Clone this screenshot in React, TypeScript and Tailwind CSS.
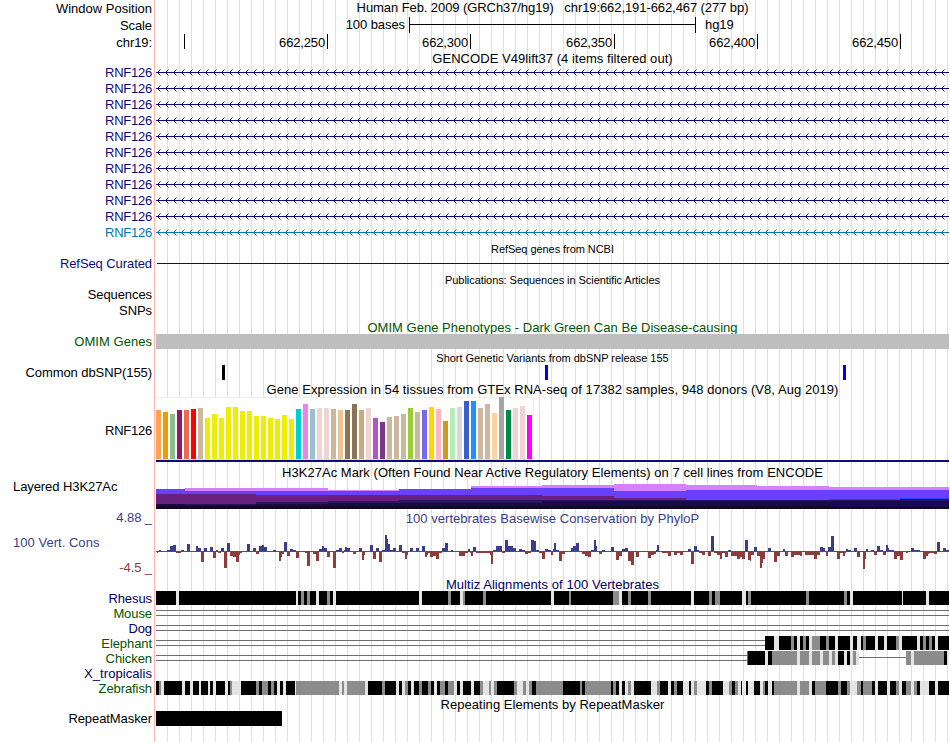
import React from 'react';
import { clsx } from 'clsx';

const TRACK_WIDTH = 793;

const NAVY = 'text-[#0c0c78]';
const GREEN = 'text-[#005500]';
const CONS_BLUE = 'text-[#3c3c8c]';
const CONS_RED = 'text-[#8c3c3c]';

interface RowProps {
  height: string;
  label?: string;
  labelClass?: string;
  alignLeft?: boolean;
  children?: React.ReactNode;
}

const Row: React.FC<RowProps> = ({ height, label, labelClass = 'pt-px', alignLeft, children }) => (
  <div className={clsx('flex', height)}>
    <div className="w-[156px] shrink-0 bg-white">
      <div
        className={clsx(
          'h-full w-[155px] border-r border-[#ffb4b4] whitespace-pre',
          alignLeft ? 'pl-[13px] text-left' : 'pr-0.5 text-right',
          labelClass
        )}
      >
        {label}
      </div>
    </div>
    <div className="w-[793px] shrink-0">{children}</div>
  </div>
);

const Title: React.FC<{ className?: string; children: React.ReactNode }> = ({ className, children }) => (
  <div className={clsx('text-center whitespace-pre', className)}>{children}</div>
);

// Intron line with strand arrows every 8px
const Transcript: React.FC<{ color: string }> = ({ color }) => {
  const tips = Array.from({ length: 99 }, (_, i) => 1.5 + i * 8);
  return (
    <svg width={TRACK_WIDTH} height={16} className="block" fill="none" stroke={color}>
      <path d={`M0 8.5H${TRACK_WIDTH}`} />
      <path d={tips.map((x) => `M${x + 3} 5.5L${x} 8.5L${x + 3} 11.5`).join('')} />
    </svg>
  );
};

const RULER = [
  { width: 'w-[29px]', text: '' },
  { width: 'w-[143px]', text: '662,250' },
  { width: 'w-[143px]', text: '662,300' },
  { width: 'w-[144px]', text: '662,350' },
  { width: 'w-[143px]', text: '662,400' },
  { width: 'w-[143px]', text: '662,450' },
];

// [color, height]
const TISSUES: [string, number][] = [
  ['#FFA54F', 49], ['#EE9A00', 47], ['#8FBC8F', 45], ['#8B1C62', 49], ['#EE6A50', 49], ['#FF0000', 50],
  ['#CDB79E', 51], ['#EEEE00', 41], ['#EEEE00', 45], ['#EEEE00', 41], ['#EEEE00', 52], ['#EEEE00', 52],
  ['#EEEE00', 48], ['#EEEE00', 48], ['#EEEE00', 43], ['#EEEE00', 43], ['#EEEE00', 41], ['#EEEE00', 40],
  ['#EEEE00', 44], ['#EEEE00', 40], ['#00CDCD', 50], ['#EE82EE', 55], ['#9AC0CD', 50], ['#EED5D2', 51],
  ['#EED5D2', 51], ['#CDB79E', 50], ['#EEC591', 49], ['#8B7355', 49], ['#8B7355', 55], ['#CDAA7D', 49],
  ['#EED5D2', 51], ['#B452CD', 41], ['#7A378B', 37], ['#CDB79E', 42], ['#CDB79E', 43], ['#CDB79E', 45],
  ['#9ACD32', 51], ['#CDB79E', 47], ['#7A67EE', 49], ['#FFD700', 52], ['#FFB6C1', 50], ['#CD9B1D', 38],
  ['#B4EEB4', 51], ['#D9D9D9', 52], ['#3A5FCD', 58], ['#1E90FF', 58], ['#CDB79E', 51], ['#CDB79E', 55],
  ['#FFD39B', 46], ['#A6A6A6', 62], ['#008B45', 49], ['#EED5D2', 51], ['#EED5D2', 53], ['#FF00FF', 44],
];

// Each step: x start, then the top of every layer (pink, violet, plum, blue, indigo, navy, black)
const H3K_COLORS = ['#d480ff', '#6a40ff', '#6a207f', '#2a40ff', '#2a1660', '#160a50', '#140820'];
const H3K_STEPS: [number, number[]][] = [
  [0, [6, 6, 11, 21, 21, 21, 23]],
  [29, [5, 8, 11, 21, 21, 22, 23]],
  [100, [5, 8, 12, 19, 19, 21, 23]],
  [172, [7, 8, 12, 18, 18, 20, 23]],
  [243, [6, 6, 12, 17, 17, 20, 23]],
  [315, [3, 5, 12, 17, 17, 20, 23]],
  [386, [2, 5, 13, 17, 17, 18, 23]],
  [458, [1, 8, 15, 17, 17, 18, 23]],
  [530, [2, 7, 17, 17, 17, 18, 23]],
  [601, [3, 7, 17, 17, 17, 18, 23]],
  [673, [4, 7, 16, 16, 17, 18, 24]],
  [744, [4, 7, 15, 15, 16, 18, 24]],
];

// Basewise scores as width:score runs
const PHYLOP =
  '1:-1 1:-2 1:-1 2:1 6:-1 3:1 3:5 3:6 5:-2 3:1 3:-1 3:7 6:-1 2:5 3:3 3:-11 3:3 3:-1 3:4 3:-7 2:1 3:-2 3:3 3:-17 3:8 3:-5 3:-6 3:-11 1:-4 2:-2 5:-1 3:7 3:-1 3:3 3:-3 3:5 2:6 3:4 6:-1 3:1 3:-1 2:-10 1:-6 2:-3 3:9 3:-5 3:2 3:1 3:-7 6:-1 2:-2 3:-15 3:-1 3:-3 3:-10 3:2 2:5 3:3 3:-6 3:-1 3:-17 3:1 3:3 2:-2 1:1 2:4 3:3 ' +
  '3:-1 3:-3 3:-1 3:3 2:-9 1:-4 5:-1 3:6 3:-8 3:3 3:-11 3:1 2:16 1:12 2:7 3:1 3:3 3:-1 3:6 3:-2 2:-8 1:-4 2:-1 3:3 3:-1 3:3 3:-1 3:5 2:-6 1:-4 2:-2 3:-6 3:-5 3:-8 3:-2 3:3 3:8 3:-1 2:1 6:-1 6:-5 3:-2 2:2 1:-2 2:-5 3:4 14:-2 1:-4 2:-13 3:1 6:5 3:-2 3:11 5:5 3:3 3:-1 3:2 3:1 3:-3 3:-2 3:11 2:10 3:1 3:-2 3:-8 3:2 2:1 ' +
  '1:1 2:-4 1:2 2:8 3:1 3:-10 3:-3 6:-1 2:3 3:5 3:8 3:-1 3:-3 3:-5 3:-6 3:1 2:11 1:5 2:-1 3:-3 3:1 6:-1 3:4 2:-1 3:-9 3:-5 3:2 3:3 3:-10 3:-14 2:-1 3:-6 9:-1 3:-7 3:-4 2:-3 1:1 2:6 3:-1 6:-2 3:-5 3:-1 3:-4 3:-2 3:-4 5:-1 3:2 3:-13 3:5 2:1 3:-2 3:-4 3:-1 3:-5 3:15 3:-2 3:-4 2:-8 3:-2 3:-6 3:1 6:-5 3:-8 2:-6 3:-8 3:11 2:-9 ' +
  '1:-10 3:-4 3:4 3:-5 2:-17 1:-12 2:-8 3:-1 3:3 3:-1 3:-11 3:-5 3:-1 2:2 3:-5 3:-1 3:-6 6:-4 2:-5 3:-1 9:-4 3:-8 3:-4 3:4 2:3 1:-1 2:-5 3:4 3:15 3:-1 3:-8 3:-2 2:-5 1:-2 2:2 3:1 3:-1 3:3 3:-6 3:-1 2:-18 1:-8 2:2 3:-1 3:1 3:-4 3:5 3:1 3:-4 2:6 1:3 5:1 3:-8 3:-5 3:-9 3:-1 2:-2 3:-1 3:3 6:1 3:-1 3:-8 2:-5 1:-3 5:-2 3:-3 3:9 3:-1 3:3 3:1';

const Phylop: React.FC = () => {
  let x = 0;
  let up = '';
  let down = '';
  PHYLOP.split(' ').forEach((run) => {
    const [w, v] = run.split(':').map(Number);
    if (v > 0) up += `M${x} 22h${w}v${-v}h${-w}z`;
    else down += `M${x} 22h${w}v${-v}h${-w}z`;
    x += w;
  });
  return (
    <svg width={TRACK_WIDTH} height={48} className="block" shapeRendering="crispEdges">
      <path d={`M0 22h${TRACK_WIDTH}v1h${-TRACK_WIDTH}z`} fill="#5a4680" />
      <path d={up} fill="#3c3c8c" />
      <path d={down} fill="#8c3c3c" />
    </svg>
  );
};

// Alignment blocks as shade + width: k black, g gray, l light, n nothing
const RHESUS =
  'k20 l3 k117 l2 k3 g3 k3 g3 k6 l3 k8 g3 k3 l3 k14 k69 l3 k26 g3 k9 l3 g2 k18 g3 k64 ' +
  'k1 l3 k15 g2 k42 g6 l3 k6 g3 k17 g3 k40 l3 k15 g3 k3 g5 k22 l4 k2 g2 ' +
  'g1 k55 g3 k35 g3 k3 l3 k49 l1 k23 l3 k20';
const ELEPHANT =
  'n609 k9 l5 k12 g3 k3 l3 k3 g3 k3 l3 g8 k6 g3 k6 l3 k12 l3 k4 l4 k2 g3 k9 l3 k6 l3 k9 g3 l3 k15 l3 k3 g3 k3 g3 k3 l3 k11';
const CHICKEN =
  'n591 e1 k17 l3 k4 g25 l3 g9 l3 g8 l3 g6 l3 g3 l3 k6 l3 k3 l3 g3 l3 n47 g5 l3 g30 k3 l2';
const ZEBRAFISH =
  'k3 g2 l3 k18 l3 k5 l3 k6 l2 k7 l2 k3 l3 k9 l3 k2 g2 l9 k15 g3 k3 g6 k3 g3 k3 l3 k3 l3 k9 l1 g43 l3 g2 l3 g3 ' +
  'g15 l3 k14 g3 k11 l3 k3 l3 g3 k3 l3 k5 g3 k6 g3 k3 l3 k3 g5 k3 g6 l3 k3 l3 k8 l3 k6 g3 l6 g2 l3 g3 k17 g3 l6 g3 l3 g3 k4 g14 ' +
  'g13 k17 g2 k3 g26 k2 g3 k3 l3 k3 l3 g3 l3 k17 l6 g3 k8 l3 k3 g3 k6 l6 k2 l3 g3 l9 k3 g3 k11 l6 g3 k3 g3 l3 k1 l4 k2 l2 ' +
  'l4 k6 l3 g2 k3 l4 k2 g23 l3 g9 l3 k3 g11 k12 g3 k6 g3 l7 g4 k2 g9 k3 l3 k9 l3 k6 g3 l3 k4 g5 l3 g3 k3 l9 k6 l3 k11';

const SHADES: Record<string, string> = { k: '#000000', g: '#8c8c8c', l: '#e4e4e4', e: '#00b400' };

interface AlignmentProps {
  blocks?: string;
  doubleTo?: number;
  single?: [number, number];
}

const Alignment: React.FC<AlignmentProps> = ({ blocks = '', doubleTo = 0, single }) => {
  let x = 0;
  const rects = blocks.split(' ').filter(Boolean).map((block) => {
    const w = Number(block.slice(1));
    const rect = { x, w, fill: SHADES[block[0]] };
    x += w;
    return rect;
  });
  return (
    <svg width={TRACK_WIDTH} height={15} className="block" shapeRendering="crispEdges">
      {doubleTo > 0 && (
        <>
          <rect x={0} y={4} width={doubleTo} height={1} fill="#6e6e6e" />
          <rect x={0} y={9} width={doubleTo} height={1} fill="#6e6e6e" />
        </>
      )}
      {single && <rect x={single[0]} y={6} width={single[1]} height={1} fill="#6e6e6e" />}
      {rects.map((r, i) => r.fill && <rect key={i} x={r.x} y={0} width={r.w} height={14} fill={r.fill} />)}
    </svg>
  );
};

export default function App() {
  return (
    <div className="h-[742px] w-[950px] overflow-hidden bg-white bg-[linear-gradient(to_right,#dcdcf8_1px,transparent_1px)] bg-[length:12px_100%] bg-[position:11px_0] font-['Liberation_Sans',Arial,sans-serif] text-[13px] leading-[15px] tracking-[-0.08px] text-black">
      {/* Position header */}
      <Row height="h-[17px]" label="Window Position" labelClass="pt-px tracking-[0px]">
        <Title>{'Human Feb. 2009 (GRCh37/hg19)   chr19:662,191-662,467 (277 bp)'}</Title>
      </Row>
      <Row height="h-[17px]" label="Scale">
        <div className="flex">
          <span className="w-[253px] pr-1 text-right">100 bases</span>
          <svg width={287} height={17} shapeRendering="crispEdges">
            <path d="M0 0h1v7h285v-7h1v16h-1v-8h-285v8h-1z" />
          </svg>
          <span className="pl-[9px]">hg19</span>
        </div>
      </Row>
      <Row height="h-[17px]" label="chr19:">
        <div className="flex h-[15px]">
          {RULER.map((tick) => (
            <span
              key={tick.width + tick.text}
              className={clsx('border-r border-black pt-px pr-0.5 text-right tracking-[-0.15px]', tick.width)}
            >
              {tick.text}
            </span>
          ))}
        </div>
      </Row>

      {/* Genes */}
      <Row height="h-[13px]">
        <Title className="tracking-[0.05px]">GENCODE V49lift37 (4 items filtered out)</Title>
      </Row>
      {Array.from({ length: 10 }, (_, i) => (
        <Row key={i} height="h-4" label="RNF126" labelClass={clsx('pt-px tracking-[-0.25px]', NAVY)}>
          <Transcript color="#0c0c78" />
        </Row>
      ))}
      <Row height="h-4" label="RNF126" labelClass="pt-px tracking-[-0.25px] text-[#0078b4]">
        <Transcript color="#0078b4" />
      </Row>
      <Row height="h-4">
        <Title className="pt-0.5 text-[11px] tracking-[-0.06px]">RefSeq genes from NCBI</Title>
      </Row>
      <Row height="h-4" label="RefSeq Curated" labelClass={NAVY}>
        <div className="pt-[7px] pl-px">
          <div className="h-px bg-[#0c0c78]" />
        </div>
      </Row>

      {/* Literature and variants */}
      <Row height="h-[15px]">
        <Title className="pt-px text-[11px] tracking-[-0.06px]">Publications: Sequences in Scientific Articles</Title>
      </Row>
      <Row height="h-4" label="Sequences" labelClass="" />
      <Row height="h-4" label="SNPs" labelClass="" />
      <Row height="h-[15px]">
        <Title className={clsx('pt-px tracking-[0.03px]', GREEN)}>
          OMIM Gene Phenotypes - Dark Green Can Be Disease-causing
        </Title>
      </Row>
      <Row height="h-4" label="OMIM Genes" labelClass={clsx('tracking-[0.04px]', GREEN)}>
        <div className="h-[15px] bg-[#bebebe]" />
      </Row>
      <Row height="h-[15px]">
        <Title className="pt-px text-[11px] tracking-[-0.02px]">Short Genetic Variants from dbSNP release 155</Title>
      </Row>
      <Row height="h-4" label="Common dbSNP(155)" labelClass="">
        <div className="flex h-[15px]">
          <div className="ml-[66px] w-[3px] bg-black" />
          <div className="ml-[320px] w-[3px] bg-[#0000f0]" />
          <div className="ml-[295px] w-[3px] bg-[#0000f0]" />
        </div>
      </Row>

      {/* Expression */}
      <Row height="h-4">
        <Title className="pt-px tracking-[0.05px]">
          Gene Expression in 54 tissues from GTEx RNA-seq of 17382 samples, 948 donors (V8, Aug 2019)
        </Title>
      </Row>
      <Row height="h-[65px]" label="RNF126" labelClass="pt-[26px] tracking-[-0.25px]">
        <div className="flex h-[63px] w-[378px] items-end gap-0.5 border-t border-r border-b border-t-[#eeeeee] border-r-[#eeeeee] border-b-[#dcdcdc] bg-white">
          {TISSUES.map(([color, height], i) => (
            <div key={i} className="w-[5px] shrink-0" style={{ backgroundColor: color, height }} />
          ))}
        </div>
        <div className="h-0.5 bg-[#0c0c78]" />
      </Row>

      {/* Regulation */}
      <Row height="h-[21px]">
        <Title className="pt-[3px] tracking-[0.04px]">
          H3K27Ac Mark (Often Found Near Active Regulatory Elements) on 7 cell lines from ENCODE
        </Title>
      </Row>
      <Row height="h-[26px]" label="Layered H3K27Ac" labelClass="leading-[7px]" alignLeft>
        <svg width={TRACK_WIDTH} height={26} className="block" shapeRendering="crispEdges">
          {H3K_STEPS.map(([x, tops], i) => {
            const end = i + 1 < H3K_STEPS.length ? H3K_STEPS[i + 1][0] : TRACK_WIDTH;
            return tops.map((top, layer) => (
              <rect key={`${x}-${layer}`} x={x} y={top} width={end - x} height={26 - top} fill={H3K_COLORS[layer]} />
            ));
          })}
        </svg>
      </Row>

      {/* Conservation */}
      <Row height="h-5" label="4.88 _" labelClass={clsx('pt-px', CONS_BLUE)}>
        <Title className={clsx('pt-0.5 tracking-[0.03px]', CONS_BLUE)}>
          100 vertebrates Basewise Conservation by PhyloP
        </Title>
      </Row>
      <div className="flex h-12">
        <div className="w-[156px] shrink-0 bg-white">
          <div className="h-12 w-[155px] border-r border-[#ffb4b4] pt-1.5">
            <div className={clsx('pl-[13px] tracking-[0.03px]', CONS_BLUE)}>100 Vert. Cons</div>
            <div className={clsx('pt-2.5 pr-0.5 text-right', CONS_RED)}>-4.5 _</div>
          </div>
        </div>
        <Phylop />
      </div>
      <Row height="h-[14px]">
        <Title className="tracking-[0.06px] text-[#00005f]">Multiz Alignments of 100 Vertebrates</Title>
      </Row>
      <Row height="h-[15px]" label="Rhesus" labelClass="text-[#00005f]">
        <Alignment blocks={RHESUS} />
      </Row>
      <Row height="h-[15px]" label="Mouse" labelClass={GREEN}>
        <Alignment doubleTo={793} />
      </Row>
      <Row height="h-[15px]" label="Dog" labelClass="text-[#00005f]">
        <Alignment doubleTo={793} />
      </Row>
      <Row height="h-[15px]" label="Elephant" labelClass={GREEN}>
        <Alignment blocks={ELEPHANT} doubleTo={609} />
      </Row>
      <Row height="h-[15px]" label="Chicken" labelClass={GREEN}>
        <Alignment blocks={CHICKEN} doubleTo={591} single={[703, 47]} />
      </Row>
      <Row height="h-[15px]" label="X_tropicalis" labelClass="tracking-[0.06px] text-[#00005f]" />
      <Row height="h-[15px]" label="Zebrafish" labelClass={GREEN}>
        <Alignment blocks={ZEBRAFISH} />
      </Row>

      {/* Repeats */}
      <Row height="h-[15px]">
        <Title className="pt-px tracking-[0.04px]">Repeating Elements by RepeatMasker</Title>
      </Row>
      <Row height="h-[31px]" label="RepeatMasker" labelClass="">
        <div className="h-[15px] w-[126px] bg-black" />
      </Row>
    </div>
  );
}
